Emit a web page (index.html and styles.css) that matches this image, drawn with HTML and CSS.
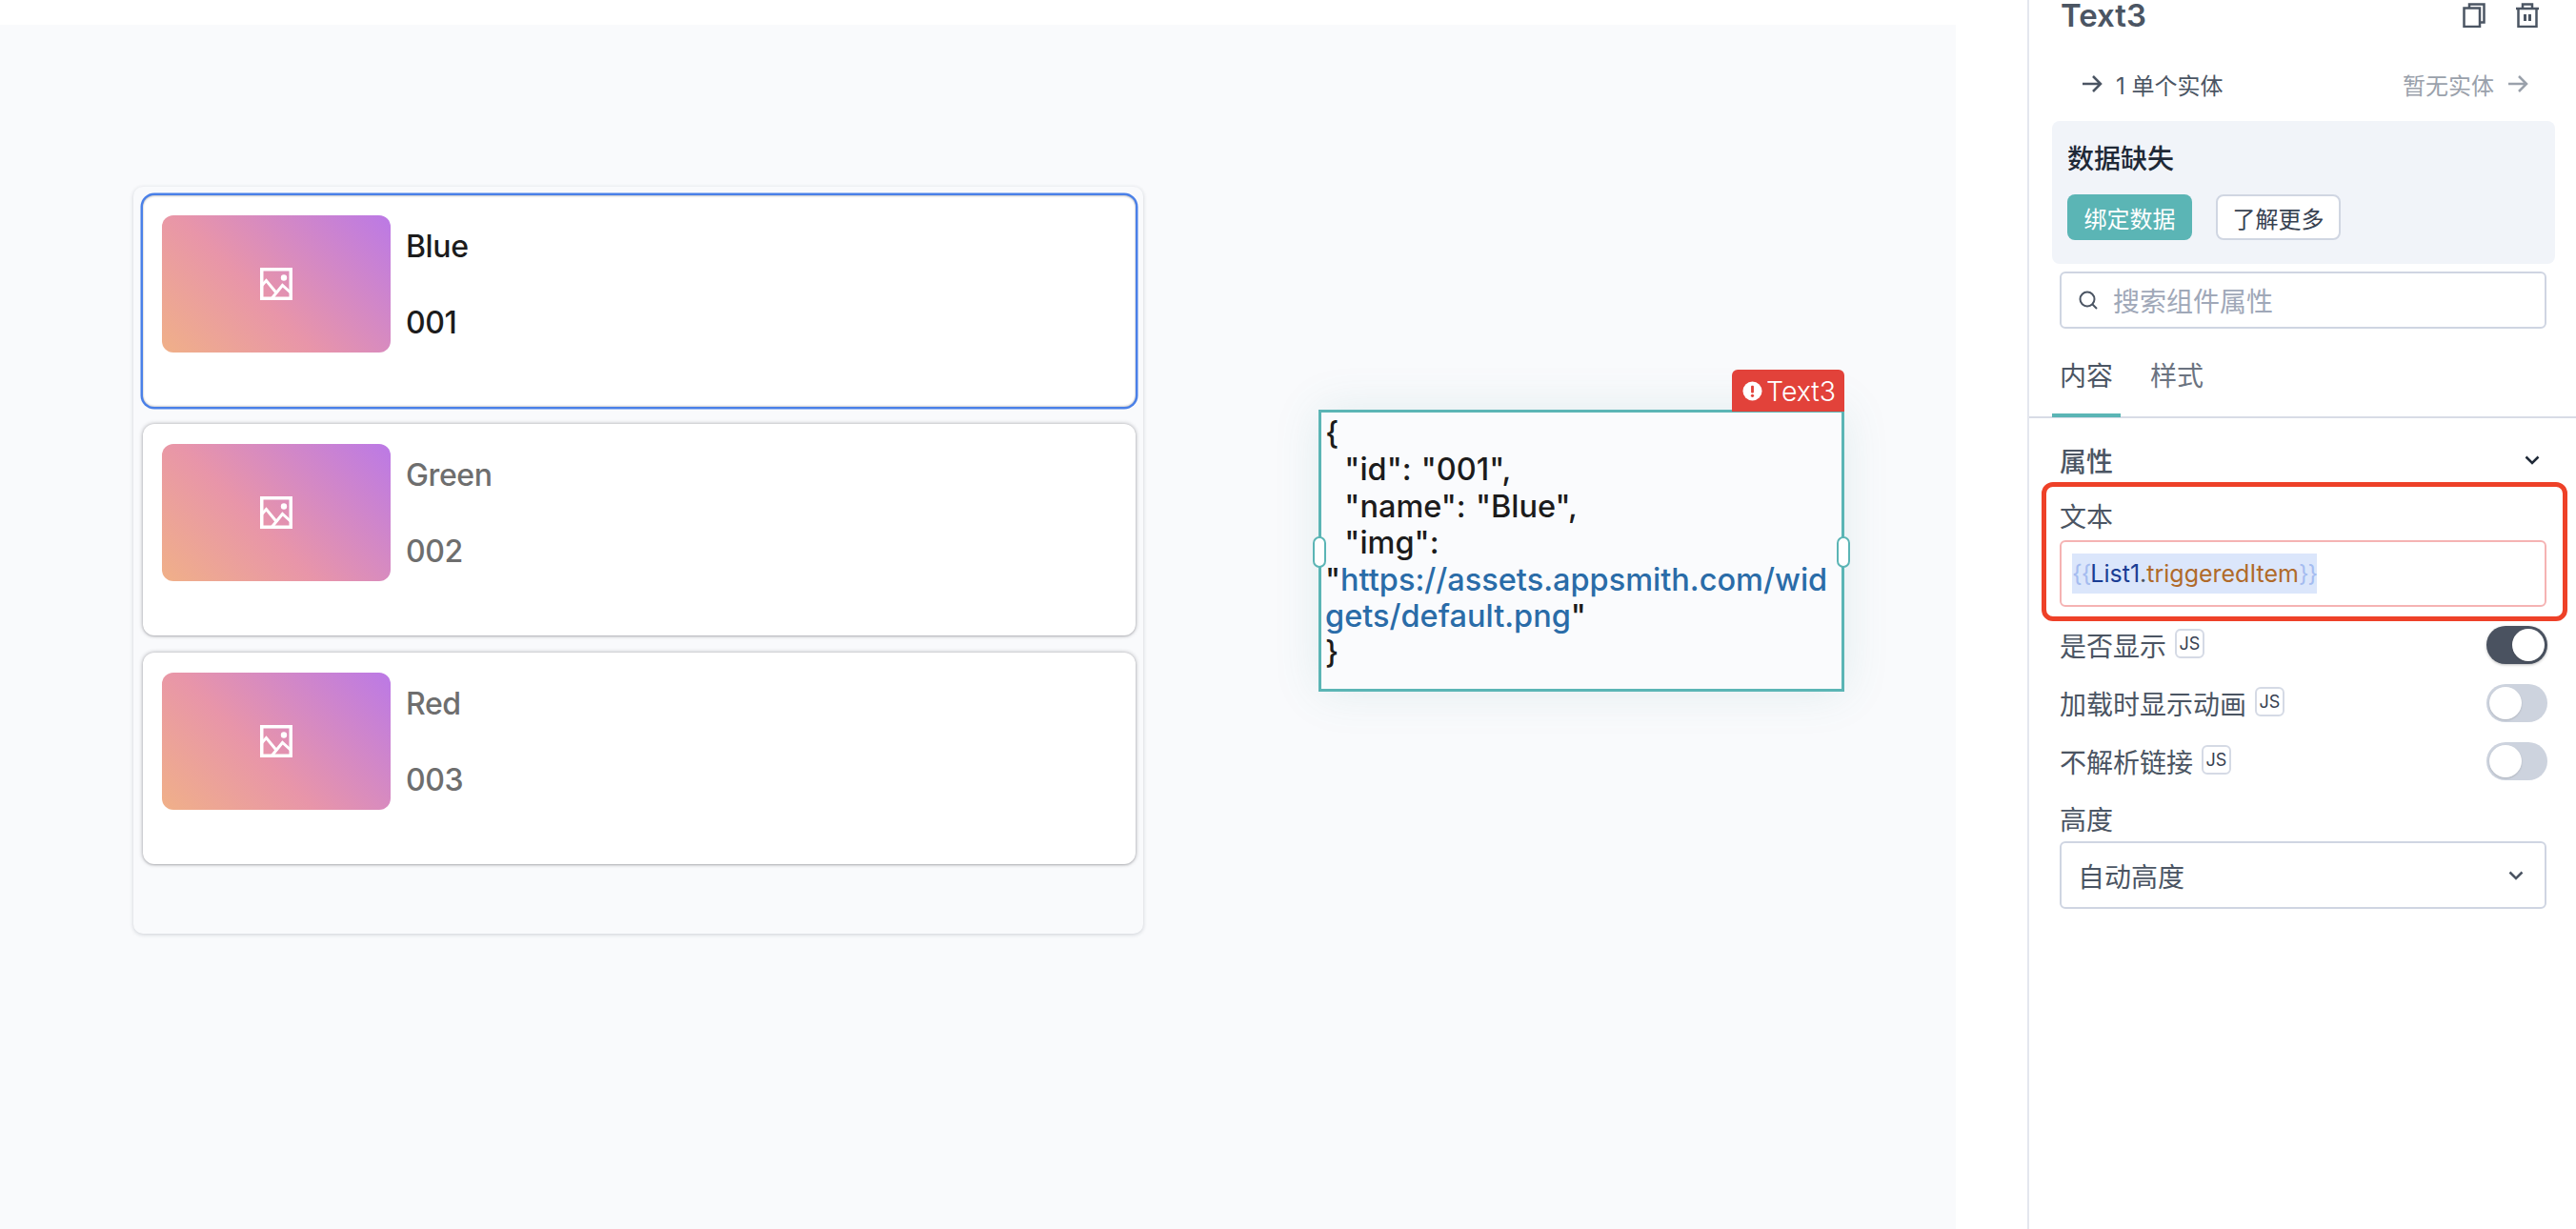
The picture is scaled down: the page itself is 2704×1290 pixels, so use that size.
FILE: index.html
```html
<!DOCTYPE html>
<html lang="zh-CN">
<head>
<meta charset="utf-8">
<title>Text3</title>
<link rel="stylesheet" href="styles.css">
</head>
<body>
<div class="app">
  <main class="workspace">
    <div class="canvas">
      <section class="list-widget">
        <article class="card card-selected">
          <div class="thumb"><svg class="thumb-icon" viewBox="0 0 34 34"><use href="#img-icon"/></svg></div>
          <div class="card-text"><div>Blue</div><div>001</div></div>
        </article>
        <article class="card">
          <div class="thumb"><svg class="thumb-icon" viewBox="0 0 34 34"><use href="#img-icon"/></svg></div>
          <div class="card-text"><div>Green</div><div>002</div></div>
        </article>
        <article class="card">
          <div class="thumb"><svg class="thumb-icon" viewBox="0 0 34 34"><use href="#img-icon"/></svg></div>
          <div class="card-text"><div>Red</div><div>003</div></div>
        </article>
      </section>

      <section class="text-widget">
        <div class="widget-tag">
          <svg class="tag-icon" viewBox="0 0 22 22"><circle cx="11" cy="11" r="10.5" fill="#fff"/><rect x="9.5" y="5" width="3" height="8" rx="1" fill="#e2423a"/><circle cx="11" cy="16" r="1.7" fill="#e2423a"/></svg>
          <span>Text3</span>
        </div>
        <div class="json-text">
          <div class="json-line">{</div>
          <div class="json-line">  "id": "001",</div>
          <div class="json-line">  "name": "Blue",</div>
          <div class="json-line">  "img":</div>
          <div class="json-line">"<span class="link">https://assets.appsmith.com/wid</span></div>
          <div class="json-line"><span class="link">gets/default.png</span>"</div>
          <div class="json-line">}</div>
        </div>
        <span class="handle handle-left"></span>
        <span class="handle handle-right"></span>
      </section>
    </div>
  </main>

  <aside class="panel">
    <header class="panel-head">
      <h1 class="panel-title">Text3</h1>
      <div class="head-actions">
        <svg class="head-icon" viewBox="0 0 24 26"><path d="M7 5V1.500h15.500v19H18M1.500 5.500h16.500v19.500H1.500z"/></svg>
        <svg class="head-icon trash" viewBox="0 0 26 26"><path d="M1 6h24M8 6V1.500h10V6M3.500 6v19h19V6"/><path class="trash-bars" d="M10.500 12v7M15.500 12v7"/></svg>
      </div>
    </header>

    <div class="entity-row">
      <div class="entity entity-left">
        <svg class="arrow" viewBox="0 0 22 20"><path d="M1 10h19M12 2l8 8-8 8"/></svg>
        <span>1 单个实体</span>
      </div>
      <div class="entity entity-right">
        <span>暂无实体</span>
        <svg class="arrow" viewBox="0 0 22 20"><path d="M1 10h19M12 2l8 8-8 8"/></svg>
      </div>
    </div>

    <div class="callout">
      <div class="callout-title">数据缺失</div>
      <div class="callout-actions">
        <button class="btn btn-primary">绑定数据</button>
        <button class="btn btn-outline">了解更多</button>
      </div>
    </div>

    <div class="search">
      <svg class="search-icon" viewBox="0 0 20 20"><circle cx="9" cy="9" r="7.500"/><path d="M14.500 14.500L19 19"/></svg>
      <span>搜索组件属性</span>
    </div>

    <nav class="tabs">
      <span class="tab tab-active">内容</span>
      <span class="tab">样式</span>
    </nav>

    <div class="section-head">
      <span>属性</span>
      <svg class="chev chev-dark" viewBox="0 0 16 10"><path d="M1.500 1.500L8 8l6.500-6.500"/></svg>
    </div>

    <div class="field field-text">
      <label class="field-label">文本</label>
      <div class="code-input">
        <span class="selection"><span class="c-brace">{{</span><span class="c-var">List1</span><span class="c-dot">.</span><span class="c-prop">triggeredItem</span><span class="c-brace">}}</span></span>
      </div>
      <div class="annotation"></div>
    </div>

    <div class="toggle-row">
      <span>是否显示</span><span class="js">JS</span>
      <span class="toggle toggle-on"></span>
    </div>
    <div class="toggle-row">
      <span>加载时显示动画</span><span class="js">JS</span>
      <span class="toggle"></span>
    </div>
    <div class="toggle-row">
      <span>不解析链接</span><span class="js">JS</span>
      <span class="toggle"></span>
    </div>

    <div class="field field-height">
      <label class="field-label">高度</label>
      <div class="select">
        <span>自动高度</span>
        <svg class="chev" viewBox="0 0 16 10"><path d="M1.500 1.500L8 8l6.500-6.500"/></svg>
      </div>
    </div>
  </aside>
</div>

<svg class="defs" width="0" height="0" aria-hidden="true">
  <symbol id="img-icon" viewBox="0 0 34 34">
    <path fill="none" stroke="#fff" stroke-width="3.500" d="M1.750 1.750h30.500v30.500H1.750z"/>
    <circle cx="25" cy="10.500" r="3.200" fill="#fff"/>
    <path fill="none" stroke="#fff" stroke-width="3" d="M2 18.500l4.500-5L18 27.500M12.500 32l11-13.500L33 27"/>
  </symbol>
</svg>
</body>
</html>
```
FILE: styles.css
```css
* { box-sizing: border-box; }
html, body { margin: 0; padding: 0; height: 100%; }
body {
  background: #fff;
  font-family: Inter, "Noto Sans CJK SC", sans-serif;
  overflow: hidden;
}
.defs { position: absolute; }
.app { display: flex; width: 2704px; height: 1290px; }

/* canvas */
.workspace { width: 2128px; padding: 26px 75px 0 0; flex: none; }
.canvas { position: relative; width: 100%; height: 100%; background: #f9fafc; }

.list-widget {
  position: absolute;
  left: 140px;
  top: 170px;
  width: 1060px;
  height: 784px;
  padding: 9px 8px;
  display: flex;
  flex-direction: column;
  gap: 18px;
  background: #f9fafc;
  border-radius: 10px;
  box-shadow: 0 1px 4px rgba(30, 40, 60, 0.2);
}
.card {
  height: 222px;
  display: flex;
  gap: 16px;
  padding: 21px 20px;
  margin: 0 0 0 2px;
  background: #fff;
  border-radius: 12px;
  color: #6e6e6e;
  box-shadow: 0 0 4px rgba(30, 30, 40, 0.38), 0 1px 2px rgba(30, 30, 40, 0.16);
}
.card-selected {
  color: #1c1c1c;
  box-shadow: 0 0 0 2.500px #4a80e8, inset 0 1px 2px rgba(30, 30, 40, 0.25), inset 0 -1px 2px rgba(30, 30, 40, 0.2);
}
.thumb {
  width: 240px;
  height: 144px;
  flex: none;
  display: flex;
  align-items: center;
  justify-content: center;
  border-radius: 12px;
  background: linear-gradient(45deg, #f0b088 0%, #e895a9 42%, #bb79e6 100%);
}
.thumb-icon { width: 34px; height: 34px; }
.card-text {
  font-size: 32px;
  font-weight: 500;
  letter-spacing: -0.4px;
  line-height: 80px;
  margin-top: -7px;
}

.text-widget {
  position: absolute;
  left: 1384px;
  top: 404px;
  width: 552px;
  height: 296px;
  border: 3px solid #5bb5b5;
  background: #fafbfd;
  box-shadow: 0 0 45px rgba(70, 150, 150, 0.13);
}
.widget-tag {
  position: absolute;
  right: -3px;
  bottom: 100%;
  margin-bottom: 1px;
  width: 118px;
  height: 44px;
  display: flex;
  align-items: center;
  gap: 4px;
  padding-left: 11px;
  background: #e2423a;
  border-radius: 6px 6px 0 0;
  color: #fff;
  font-size: 28.500px;
  font-weight: 300;
}
.tag-icon { width: 21px; height: 21px; flex: none; }
.json-text {
  padding: 3px 0 0 4px;
  color: #1c1c1c;
  font-size: 32.500px;
  font-weight: 500;
  word-spacing: 1.500px;
  line-height: 38.400px;
}
.json-line { white-space: pre; }
.link { color: #2a6ca8; }
.handle {
  position: absolute;
  top: 130px;
  width: 14px;
  height: 33px;
  background: #fff;
  border: 2.500px solid #5bb5b5;
  border-radius: 7px;
}
.handle-left { left: -9px; }
.handle-right { right: -9px; }

/* panel */
.panel {
  flex: 1;
  min-width: 0;
  border-left: 2px solid #e4e7ee;
  color: #4b5563;
  font-size: 28px;
}
.panel-head {
  height: 32px;
  display: flex;
  align-items: center;
  justify-content: space-between;
  padding: 0 38px 0 33px;
}
.panel-title {
  margin: 0;
  font-size: 33px;
  font-weight: 600;
  line-height: 32px;
  color: #4b5563;
}
.head-actions { display: flex; gap: 31px; }
.head-icon {
  width: 24px;
  height: 26px;
  fill: none;
  stroke: #4b5563;
  stroke-width: 2.500;
}
.head-icon.trash { width: 26px; }
.trash-bars { stroke-width: 3; }

.entity-row {
  height: 40px;
  margin-top: 36px;
  display: flex;
  align-items: center;
  justify-content: space-between;
  padding: 0 50px 0 55px;
  font-size: 24px;
}
.entity { display: flex; align-items: center; gap: 14px; }
.entity-right { color: #9aa1ab; }
.arrow {
  width: 22px;
  height: 20px;
  fill: none;
  stroke: currentColor;
  stroke-width: 2.500;
}

.callout {
  height: 150px;
  margin: 19px 22px 0 24px;
  padding: 22px 16px 0;
  background: #f1f4f9;
  border-radius: 8px;
}
.callout-title {
  font-size: 28px;
  font-weight: 500;
  line-height: 36px;
  color: #1f2937;
}
.callout-actions { display: flex; gap: 25px; margin-top: 19px; }
.btn {
  height: 48px;
  width: 131px;
  padding: 0;
  font: inherit;
  font-size: 24px;
  border-radius: 8px;
  cursor: pointer;
}
.btn-primary { background: #5bb5b5; border: 0; color: #fff; }
.btn-outline { background: #fff; border: 2px solid #d0d6e2; color: #374151; }

.search {
  height: 60px;
  margin: 8px 31px 0 32px;
  display: flex;
  align-items: center;
  gap: 16px;
  padding-left: 18px;
  border: 2px solid #cfd5e2;
  border-radius: 6px;
  color: #a0a8b8;
  font-size: 28px;
}
.search-icon {
  width: 20px;
  height: 20px;
  fill: none;
  stroke: #4b5563;
  stroke-width: 2;
}

.tabs {
  height: 94px;
  display: flex;
  align-items: flex-end;
  gap: 16px;
  padding-left: 24px;
  border-bottom: 2px solid #d8dce6;
}
.tab {
  width: 72px;
  height: 62px;
  text-align: center;
  line-height: 38px;
  color: #6b7380;
  border-bottom: 4px solid transparent;
  margin-bottom: -1px;
}
.tab + .tab { width: 86px; }
.tab-active { color: #4b5563; border-bottom-color: #5bb5b5; }

.section-head {
  height: 40px;
  margin-top: 24px;
  display: flex;
  align-items: center;
  justify-content: space-between;
  padding: 0 38px 0 32px;
  font-weight: 500;
}
.chev {
  width: 16px;
  height: 10px;
  fill: none;
  stroke: #4b5563;
  stroke-width: 2.500;
}
.chev-dark { stroke: #1f2937; }

.field { position: relative; margin: 0 31px 0 32px; }
.field-label { display: block; line-height: 38px; }
.field-text { margin-top: 21px; }
.code-input {
  height: 70px;
  margin-top: 5px;
  display: flex;
  align-items: center;
  padding-left: 11px;
  border: 2px solid #f5b3b3;
  border-radius: 6px;
  font-size: 25px;
  white-space: nowrap;
}
.selection { display: inline-block; height: 42px; line-height: 42px; background: #dbe6fb; }
.c-brace { color: #a5bcf0; letter-spacing: -1px; }
.c-var { color: #1a3d94; }
.c-dot { color: #4b5563; }
.c-prop { color: #b06a2a; }
.annotation {
  position: absolute;
  left: -19px;
  right: -22px;
  top: -18px;
  bottom: -15px;
  border: 5px solid #ee4128;
  border-radius: 12px;
  pointer-events: none;
}

.toggle-row {
  height: 40px;
  margin: 21px 30px 0 32px;
  display: flex;
  align-items: center;
  gap: 9px;
}
.field-text + .toggle-row { margin-top: 20px; }
.js {
  width: 31px;
  height: 31px;
  display: flex;
  align-items: center;
  justify-content: center;
  border: 2px solid #d5dae5;
  border-radius: 6px;
  color: #374151;
  font-size: 18px;
  margin-top: -4px;
}
.toggle {
  position: relative;
  width: 64px;
  height: 40px;
  margin-left: auto;
  flex: none;
  background: #cdd3de;
  border-radius: 20px;
}
.toggle::after {
  content: "";
  position: absolute;
  top: 3px;
  left: 3px;
  width: 34px;
  height: 34px;
  background: #fff;
  border-radius: 50%;
  box-shadow: 0 1px 2px rgba(0, 0, 0, 0.15);
}
.toggle-on { background: #4a5260; box-shadow: 0 1px 3px rgba(0, 0, 0, 0.25); }
.toggle-on::after { left: 27px; }

.field-height { margin-top: 23px; }
.select {
  height: 71px;
  margin-top: 3px;
  display: flex;
  align-items: center;
  justify-content: space-between;
  padding: 0 22px 0 17px;
  border: 2px solid #cfd5e2;
  border-radius: 6px;
}
```
